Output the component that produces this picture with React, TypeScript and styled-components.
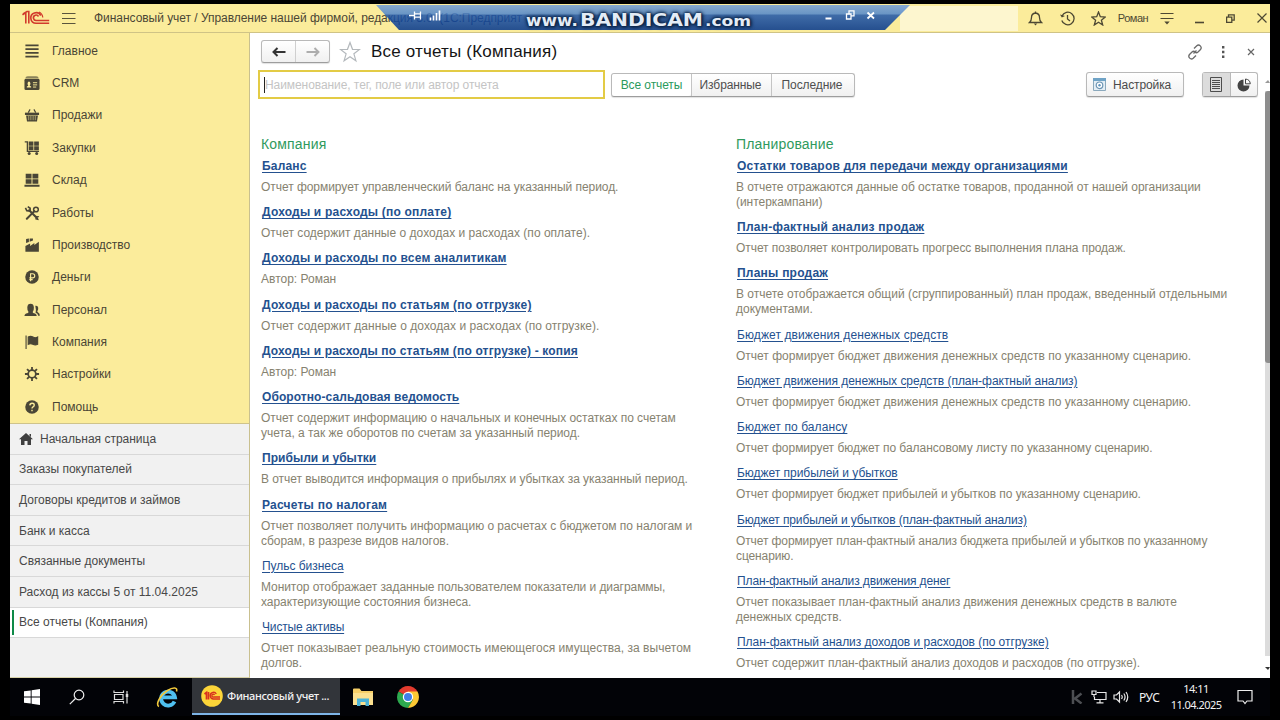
import React from 'react';
import styled, { createGlobalStyle, css } from 'styled-components';

const Global = createGlobalStyle`
  html, body { margin: 0; padding: 0; background: #000; overflow: hidden; }
  * { box-sizing: border-box; }
  svg { display: block; flex: none; }
`;

const Screen = styled.div`
  width: 1280px;
  height: 720px;
  padding: 4px 10px 0;
  background: #000;
  font-family: "Liberation Sans", Arial, sans-serif;
  font-size: 12px;
  color: #4a4536;
  display: flex;
  flex-direction: column;
  overflow: hidden;
`;

const TitleBar = styled.header`
  position: relative;
  height: 29px;
  flex: none;
  display: flex;
  align-items: center;
  background: #fbec9b;
  border-bottom: 1px solid #cfc386;
  padding-left: 12px;
`;

const AppTitle = styled.div`
  margin-left: 18px;
  width: 806px;
  white-space: pre;
  font-size: 12px;
  letter-spacing: -0.04px;
  color: #4b4635;
`;

const GlobalSearch = styled.div`
  width: 118px;
  height: 25px;
  flex: none;
  background: #fdf6cf;
`;

const TitleTools = styled.div`
  display: grid;
  grid-template-columns: 31px 32px 31px 38px 30px 34px 29px 25px;
  align-items: center;
  justify-items: center;
  padding-left: 2px;
  color: #4d4833;
`;

const CloseIcon = styled.svg`
  justify-self: end;
  margin-right: 3px;
`;

const UserName = styled.span`
  font-size: 11px;
  letter-spacing: -0.45px;
`;

const Banner = styled.div`
  position: absolute;
  left: 366px;
  top: 1px;
  width: 534px;
  height: 25px;
  clip-path: polygon(0 0, 100% 0, 509px 100%, 23px 100%);
`;

const BannerFill = styled.div`
  height: 25px;
  opacity: 0.85;
  background: linear-gradient(#719dd8 0, #5086cc 9px, #1e55aa 10px, #00348d 100%);
`;

const BannerIcons = styled.svg`
  position: absolute;
  left: 0;
  top: 0;
`;

const Watermark = styled.div`
  position: absolute;
  left: 516px;
  top: 5px;
  height: 23px;
  display: flex;
  align-items: baseline;
  font-family: "DejaVu Sans", sans-serif;
  font-weight: bold;
  color: #e3ecf6;
  text-shadow: 0 0 2px #0b2344, 0 0 3px #0b2344, 1px 1px 3px #0b2344, 0 0 5px #0b2344;
`;

const WatermarkPart = styled.span<{ $size: number; $width: number; $stretch: number }>`
  font-size: ${p => p.$size}px;
  width: ${p => p.$width}px;
  line-height: 22px;
  white-space: nowrap;
  transform: scaleX(${p => p.$stretch});
  transform-origin: left;
`;

const Body = styled.div`
  display: flex;
  height: 645px;
  flex: none;
`;

const Sidebar = styled.nav`
  width: 240px;
  flex: none;
  display: flex;
  flex-direction: column;
  background: #f1f1f1;
  border-right: 1px solid #c9c08f;
  border-bottom: 1px solid #d8d2a8;
`;

const Sections = styled.div`
  background: #fbec9b;
  height: 391px;
  flex: none;
  padding-top: 1.4px;
  border-bottom: 1px solid #cfc38a;
`;

const Section = styled.div`
  height: 32.4px;
  display: flex;
  align-items: center;
  gap: 12px;
  padding-left: 14px;
  font-size: 12px;
  color: #4a4535;
`;

const OpenTab = styled.div<{ $active?: boolean }>`
  height: 30.6px;
  display: flex;
  align-items: center;
  gap: 7px;
  padding-left: 9px;
  border-bottom: 1px solid #d8d8d8;
  font-size: 12px;
  color: #484848;
  position: relative;
  ${p => p.$active && css`
    background: #fff;
    &::before {
      content: '';
      position: absolute;
      left: 2px;
      top: 2px;
      bottom: 2px;
      width: 2px;
      background: #0e8a48;
    }
  `}
`;

const Main = styled.main`
  position: relative;
  flex: 1;
  background: #fff;
  display: flex;
  flex-direction: column;
  overflow: hidden;
`;

const PageHead = styled.div`
  height: 37px;
  flex: none;
  display: flex;
  align-items: center;
  padding: 0 11px;
`;

const raised = css`
  border: 1px solid #b9b9b9;
  border-bottom-color: #9d9d9d;
  border-radius: 3px;
  background: linear-gradient(#fff, #f0f0f0);
  box-shadow: 0 1px 1px rgba(0, 0, 0, 0.12);
`;

const NavButtons = styled.div`
  ${raised}
  width: 69px;
  height: 23px;
  display: flex;
`;

const NavButton = styled.div`
  flex: 1;
  display: flex;
  align-items: center;
  justify-content: center;
  & + & { border-left: 1px solid #cfcfcf; }
`;

const PageTitle = styled.h1`
  margin: 0 0 0 10px;
  font-size: 17px;
  letter-spacing: 0.18px;
  font-weight: normal;
  color: #151515;
  flex: 1;
  white-space: nowrap;
`;

const HeadTools = styled.div`
  display: flex;
  align-items: center;
  gap: 14px;
`;

const FilterBar = styled.div`
  height: 29px;
  flex: none;
  display: flex;
  align-items: center;
  padding: 0 12px 0 8px;
`;

const SearchField = styled.div`
  width: 347px;
  height: 29px;
  border: 2px solid #e3cb45;
  display: flex;
  align-items: center;
  padding-left: 4px;
  font-size: 12px;
  letter-spacing: -0.07px;
  color: #c4c4c4;
`;

const Caret = styled.span`
  width: 1px;
  height: 16px;
  background: #222;
`;

const Switcher = styled.div`
  ${raised}
  display: flex;
  width: 244px;
  height: 24px;
  margin-left: 6px;
`;

const SwitchItem = styled.div<{ $active?: boolean }>`
  flex: 0 0 80px;
  display: flex;
  align-items: center;
  justify-content: center;
  letter-spacing: -0.1px;
  white-space: nowrap;
  color: ${p => (p.$active ? '#2a9a5c' : '#4f4f4f')};
  background: ${p => (p.$active ? '#fff' : 'transparent')};
  border-radius: 3px;
  & + & { border-left: 1px solid #c4c4c4; border-radius: 0; padding-right: 2px; }
  &:first-child { flex-basis: 79px; }
  &:last-child { flex-basis: 83px; }
`;

const SetupButton = styled.div`
  ${raised}
  width: 98px;
  height: 25px;
  margin-left: auto;
  display: flex;
  align-items: center;
  gap: 7px;
  padding-left: 6px;
  letter-spacing: -0.1px;
  color: #4a4a4a;
`;

const ViewToggle = styled.div`
  ${raised}
  width: 56px;
  height: 25px;
  margin-left: 18px;
  display: flex;
`;

const ViewOption = styled.div<{ $on?: boolean }>`
  flex: 1;
  display: flex;
  align-items: center;
  justify-content: center;
  background: ${p => (p.$on ? '#dcdcdc' : 'transparent')};
  & + & { border-left: 1px solid #b9b9b9; }
`;

const Reports = styled.div`
  display: flex;
  padding: 37px 0 0 11px;
`;

const Group = styled.section`
  width: 475px;
  flex: none;
`;

const GroupName = styled.h2`
  margin: 0 0 5px;
  font-size: 14px;
  letter-spacing: 0.18px;
  line-height: 17px;
  height: 17px;
  font-weight: normal;
  color: #2f9a5d;
`;

const Report = styled.article`
  padding-bottom: 9.22px;
`;

const ReportLink = styled.a<{ $bold?: boolean; $track?: number }>`
  display: block;
  width: max-content;
  margin: 0 0 6px 1px;
  height: 16px;
  line-height: 16px;
  font-size: 12px;
  font-weight: ${p => (p.$bold ? 'bold' : 'normal')};
  letter-spacing: ${p => (p.$bold ? 0.18 : -0.03) + (p.$track ?? 0)}px;
  text-decoration: underline;
  text-underline-offset: 2px;
  color: #24518f;
`;

const ReportNote = styled.p<{ $track?: number }>`
  margin: 0;
  font-size: 12px;
  line-height: 15px;
  letter-spacing: ${p => -0.045 + (p.$track ?? 0)}px;
  white-space: pre;
  color: #86826f;
`;

const Scrollbar = styled.div`
  position: absolute;
  right: 0;
  top: 47px;
  width: 5px;
  height: 590px;
  display: flex;
  flex-direction: column;
  justify-content: space-between;
  align-items: flex-end;
`;

const Track = styled.div`
  flex: 1;
  width: 5px;
  margin: 8px 0 11px;
  background: #dcdcdc;
`;

const Thumb = styled.div`
  height: 272px;
  border-radius: 3px 0 0 3px;
  background: #8d8d8d;
`;

const Taskbar = styled.footer`
  height: 38px;
  flex: none;
  display: flex;
  align-items: center;
  background: #020307;
  color: #f2f2f2;
  font-family: "Noto Sans", "Open Sans", sans-serif;
`;

const TaskIcon = styled.div<{ $w: number }>`
  width: ${p => p.$w}px;
  height: 38px;
  display: flex;
  align-items: center;
  justify-content: center;
`;

const TaskWindow = styled.div`
  width: 148px;
  height: 37px;
  align-self: flex-start;
  display: flex;
  align-items: center;
  gap: 4px;
  padding-left: 9px;
  background: #32353a;
  border-bottom: 2px solid #7db4e6;
  font-size: 11px;
  font-weight: 500;
  letter-spacing: -0.35px;
  white-space: nowrap;
`;

const Tray = styled.div`
  margin-left: auto;
  display: flex;
  align-items: center;
  padding-right: 17px;
`;

const Lang = styled.span`
  font-size: 12px;
  letter-spacing: -0.4px;
  margin: 0 12px 0 10px;
  width: 20px;
`;

const Clock = styled.div`
  width: 50px;
  margin-right: 16px;
  display: flex;
  flex-direction: column;
  align-items: center;
  font-size: 11px;
  line-height: 16.5px;
  letter-spacing: -0.55px;
  white-space: nowrap;
`;

const ink = '#4a4636';

const sectionIcons: Record<string, React.ReactNode> = {
  main: <path d="M1.500 2.500h14M1.500 6.500h14M1.500 10.500h14M1.500 14.500h14" stroke={ink} strokeWidth="1.900" />,
  crm: (
    <>
      <path d="M1.500 3.500Q1.500 1.200 4 1.200h9q2.500 0 2.500 2.300z" fill="#8b8359" />
      <rect x=".5" y="4" width="16" height="12" rx="1.500" fill={ink} />
      <path d="M3 13.200v-1l1.600-.8q-1-1-.8-2.600q.2-1.800 1.500-1.800t1.500 1.800q.2 1.600-.8 2.600l1.600.8v1z" fill="#fbec9b" />
      <path d="M9.500 8.200h4.500M9.500 10.500h4.500M9.500 12.800h3.500" stroke="#fbec9b" strokeWidth="1" />
    </>
  ),
  sales: (
    <>
      <path d="M1 6h15v2.500H1z" fill={ink} />
      <path d="M4.500 6L6.500 2.500M12.500 6L10.500 2.500" stroke={ink} strokeWidth="1.200" />
      <path d="M2.200 9h12.600l-1 6.500H3.200z" fill={ink} />
      <path d="M5 9.500v4.500M7.300 9.500v4.500M9.700 9.500v4.500M12 9.500v4.500" stroke="#d9cc86" strokeWidth=".7" />
    </>
  ),
  purchase: (
    <>
      <path d="M.8 2h2.800v10H16" stroke={ink} strokeWidth="1.400" fill="none" />
      <path d="M5 1.500h5V6H5zM10.800 1.500h5V6h-5zM5 6.700h5v4.300H5zM10.800 6.700h5v4.300h-5z" fill={ink} />
      <circle cx="5.500" cy="14.300" r="1.600" fill={ink} />
      <circle cx="13.500" cy="14.300" r="1.600" fill={ink} />
    </>
  ),
  stock: <path d="M1.800 1.800h6.200v5H1.800zM9 1.800h6.200v5H9zM1.800 7.700h6.200v4.900H1.800zM9 7.700h6.200v4.900H9zM.5 13.500h16v2.300H.5z" fill={ink} />,
  works: (
    <>
      <path d="M3 14.500L11 6.500M5.500 5.500l8.500 8.500" stroke={ink} strokeWidth="2.200" strokeLinecap="round" />
      <path d="M1.500 3l1.500 3 3.500.5L6.500 3.500 4 1.800" stroke={ink} strokeWidth="1.700" fill="none" />
      <circle cx="12.700" cy="4.800" r="2.500" stroke={ink} strokeWidth="1.600" fill="none" />
      <path d="M11.500 12l4.500.5M12 14.500l3.500 1" stroke={ink} strokeWidth="1.300" />
    </>
  ),
  factory: (
    <path d="M1.500 15.700V9.500l5-2.500v2.500l4.500-3v2L15.800 5v10.700zM2.200 2.200l3-.7v3.800l-3 1.200zM6 1.500h3.500v2.300L6 5z" fill={ink} />
  ),
  money: (
    <>
      <circle cx="8.500" cy="8.500" r="7.200" fill={ink} />
      <path d="M7 13V5h2.200q2.200 0 2.200 2.200t-2.200 2.200H5.700M5.700 11.300h3.500" stroke="#fbec9b" strokeWidth="1.200" fill="none" />
    </>
  ),
  staff: (
    <>
      <path d="M.5 15q0-2.500 3-3 1.500-.3 1.200-1.700Q3.300 8.500 3.500 5.500 3.800 1.800 7 1.800t3.500 3.700q.2 3-1.200 4.800-.3 1.400 1.200 1.700 3 .5 3 3z" fill={ink} />
      <path d="M12 4q2.800-.5 3.100 2 .2 2.200-1 3.800 0 1 1.200 1.700 1.500.6 1.500 3h-1.700q-.3-2.500-2.800-3.200.8-2.500-.3-7.300z" fill={ink} />
    </>
  ),
  company: <path d="M2.200 1.500v14.500M4.500 3.200q2.500-1.500 5 0t5 0v7.800q-2.500 1.300-5 0t-5 0z" fill={ink} stroke={ink} strokeWidth="1.200" />,
  settings: (
    <>
      <circle cx="8.500" cy="8.500" r="4.100" stroke={ink} strokeWidth="1.900" fill="none" />
      <path d="M8.500 1v3.200M8.500 12.800V16M1 8.500h3.200M12.800 8.500H16M3.200 3.200l2.300 2.300M11.500 11.500l2.300 2.300M3.200 13.800l2.300-2.300M11.500 5.500l2.300-2.300" stroke={ink} strokeWidth="1.900" />
    </>
  ),
  help: (
    <>
      <circle cx="8.500" cy="8.500" r="7.200" fill={ink} />
      <path d="M6.200 6.800q.2-2.300 2.400-2.300t2.300 1.900q0 1.200-1.300 1.900-1.100.6-1.100 1.700M8.500 11.300v1.700" stroke="#fbec9b" strokeWidth="1.500" fill="none" />
    </>
  ),
};

const sections: [string, string][] = [
  ['main', 'Главное'], ['crm', 'CRM'], ['sales', 'Продажи'], ['purchase', 'Закупки'],
  ['stock', 'Склад'], ['works', 'Работы'], ['factory', 'Производство'], ['money', 'Деньги'],
  ['staff', 'Персонал'], ['company', 'Компания'], ['settings', 'Настройки'], ['help', 'Помощь'],
];

const openTabs = [
  'Заказы покупателей', 'Договоры кредитов и займов', 'Банк и касса',
  'Связанные документы', 'Расход из кассы 5 от 11.04.2025', 'Все отчеты (Компания)',
];

// titleTrack and noteTrack are small letter-spacing corrections, in pixels
type ReportData = { title: string; note: string; bold?: boolean; titleTrack?: number; noteTrack?: number };

const groups: { name: string; reports: ReportData[] }[] = [
  {
    name: 'Компания',
    reports: [
      { bold: true, title: 'Баланс', note: 'Отчет формирует управленческий баланс на указанный период.' },
      { bold: true, title: 'Доходы и расходы (по оплате)', titleTrack: 0.02, note: 'Отчет содержит данные о доходах и расходах (по оплате).', noteTrack: 0.06 },
      { bold: true, title: 'Доходы и расходы по всем аналитикам', titleTrack: 0.03, note: 'Автор: Роман', noteTrack: 0.05 },
      { bold: true, title: 'Доходы и расходы по статьям (по отгрузке)', note: 'Отчет содержит данные о доходах и расходах (по отгрузке).', noteTrack: 0.09 },
      { bold: true, title: 'Доходы и расходы по статьям (по отгрузке) - копия', titleTrack: -0.01, note: 'Автор: Роман', noteTrack: 0.05 },
      { bold: true, title: 'Оборотно-сальдовая ведомость', titleTrack: -0.1, note: 'Отчет содержит информацию о начальных и конечных остатках по счетам\nучета, а так же оборотов по счетам за указанный период.', noteTrack: 0.02 },
      { bold: true, title: 'Прибыли и убытки', titleTrack: -0.14, note: 'В отчет выводится информация о прибылях и убытках за указанный период.' },
      { bold: true, title: 'Расчеты по налогам', titleTrack: 0.05, note: 'Отчет позволяет получить информацию о расчетах с бюджетом по налогам и\nсборам, в разрезе видов налогов.', noteTrack: 0.02 },
      { title: 'Пульс бизнеса', note: 'Монитор отображает заданные пользователем показатели и диаграммы,\nхарактеризующие состояния бизнеса.', noteTrack: -0.02 },
      { title: 'Чистые активы', titleTrack: -0.12, note: 'Отчет показывает реальную стоимость имеющегося имущества, за вычетом\nдолгов.', noteTrack: 0.075 },
    ],
  },
  {
    name: 'Планирование',
    reports: [
      { bold: true, title: 'Остатки товаров для передачи между организациями', titleTrack: 0.01, note: 'В отчете отражаются данные об остатке товаров, проданной от нашей организации\n(интеркампани)' },
      { bold: true, title: 'План-фактный анализ продаж', titleTrack: 0.07, note: 'Отчет позволяет контролировать прогресс выполнения плана продаж.', noteTrack: -0.015 },
      { bold: true, title: 'Планы продаж', titleTrack: 0.05, note: 'В отчете отображается общий (сгруппированный) план продаж, введенный отдельными\nдокументами.', noteTrack: 0.037 },
      { title: 'Бюджет движения денежных средств', titleTrack: 0.13, note: 'Отчет формирует бюджет движения денежных средств по указанному сценарию.', noteTrack: 0.045 },
      { title: 'Бюджет движения денежных средств (план-фактный анализ)', note: 'Отчет формирует бюджет движения денежных средств по указанному сценарию.', noteTrack: 0.045 },
      { title: 'Бюджет по балансу', titleTrack: 0.12, note: 'Отчет формирует бюджет по балансовому листу по указанному сценарию.', noteTrack: 0.015 },
      { title: 'Бюджет прибылей и убытков', note: 'Отчет формирует бюджет прибылей и убытков по указанному сценарию.', noteTrack: -0.01 },
      { title: 'Бюджет прибылей и убытков (план-фактный анализ)', titleTrack: -0.09, note: 'Отчет формирует план-фактный анализ бюджета прибылей и убытков по указанному\nсценарию.', noteTrack: -0.06 },
      { title: 'План-фактный анализ движения денег', titleTrack: -0.09, note: 'Отчет показывает план-фактный анализ движения денежных средств в валюте\nденежных средств.', noteTrack: -0.01 },
      { title: 'План-фактный анализ доходов и расходов (по отгрузке)', note: 'Отчет содержит план-фактный анализ доходов и расходов (по отгрузке).' },
    ],
  },
];

const Logo1C = () => (
  <svg width="28" height="16" viewBox="0 0 28 16" fill="none" stroke="#d23a2c" strokeWidth="1.600">
    <path d="M.5 4.800L3.800 2.500V13.500M6.800 13.500V1.500H5L1 4" />
    <path d="M18.800 5.500A5.300 5.300 0 1 0 14.200 13.300H27.200M16.500 6.500A2.700 2.700 0 1 0 14.500 10.500H27.200" />
    <path d="M20.800 7.500A6.800 6.800 0 0 0 17 2" strokeWidth="1.200" />
  </svg>
);

const Burger = () => (
  <svg width="14" height="14" viewBox="0 0 14 14" stroke="#5a543c" strokeWidth="1.200" style={{ marginLeft: 12 }}>
    <path d="M0 2.500h13.500M0 7.500h13.500M0 12.500h13.500" />
  </svg>
);

const TitleIcons = () => (
  <TitleTools>
    <svg width="15" height="15" viewBox="0 0 15 15" fill="none" stroke="currentColor" strokeWidth="1.300">
      <path d="M1.500 11.500h12q-2-1.800-2-5 0-4-4-4.500-4 .5-4 4.500 0 3.200-2 5zM7.500 2V.5" />
      <path d="M5.800 12.500h3.400L7.500 14.500z" fill="currentColor" stroke="none" />
    </svg>
    <svg width="15" height="15" viewBox="0 0 15 15" fill="none" stroke="currentColor" strokeWidth="1.300">
      <path d="M2 5A6.300 6.300 0 1 1 1.800 9.500M7.500 4v4l2.500 2" />
      <path d="M0 3.500l1.800 3L5 5z" fill="currentColor" stroke="none" />
    </svg>
    <svg width="15" height="15" viewBox="0 0 15 15" fill="none" stroke="currentColor" strokeWidth="1.300">
      <path d="M7.500 1l1.800 4.700 5 .3-3.900 3.200 1.300 4.800-4.200-2.700L3.300 14l1.300-4.800L.7 6l5-.3z" />
    </svg>
    <UserName>Роман</UserName>
    <svg width="14" height="13" viewBox="0 0 14 13" fill="none" stroke="currentColor" strokeWidth="1.200">
      <path d="M.5 1.500h13M.5 6.500h13" />
      <path d="M4.300 9.500h5.400L7 12.500z" fill="currentColor" stroke="none" />
    </svg>
    <svg width="9" height="13" viewBox="0 0 9 13" stroke="currentColor" strokeWidth="1.600"><path d="M0 10.500h9" /></svg>
    <svg width="9" height="9" viewBox="0 0 9 9" fill="none" stroke="currentColor" strokeWidth="1.300">
      <path d="M.6 3.200h5.200v5.200H.6zM2.500 3V.8h5.700v5.400h-2" />
    </svg>
    <CloseIcon width="10" height="10" viewBox="0 0 10 10" stroke="currentColor" strokeWidth="1.200"><path d="M.5.5l9 9M9.500.5l-9 9" /></CloseIcon>
  </TitleTools>
);

const RemoteBanner = () => (
  <Banner>
    <BannerFill />
    <BannerIcons width="534" height="25" viewBox="0 0 534 25" fill="none" stroke="#fff" strokeWidth="1.300">
      <path d="M33 10.500h5M38.500 6.500v8M39 8.800h5.500M39 12.200h5.500M44.500 6.500v8" />
      <path d="M54.500 15.500v-3M57.500 15.500v-5M60.500 15.500V8M63.500 15.500V5.500" strokeWidth="1.700" />
      <path d="M449.500 13.500h6" strokeWidth="2" />
      <path d="M470.500 9h4.500v5h-4.500zM473 8.500V5.800h5v5h-2.500" />
      <path d="M491.500 7.500l6.500 6M498 7.500l-6.500 6" strokeWidth="1.800" />
    </BannerIcons>
  </Banner>
);

const SystemTaskbar = () => (
  <Taskbar>
    <TaskIcon $w={44}>
      <svg width="16" height="16" viewBox="0 0 16 16" fill="#fff"><path d="M0 2.300L6.700 1.400v6.200H0zM7.600 1.300L16 0v7.600H7.600zM0 8.400h6.700v6.200L0 13.700zM7.600 8.400H16V16l-8.400-1.300z" /></svg>
    </TaskIcon>
    <TaskIcon $w={46}>
      <svg width="16" height="16" viewBox="0 0 16 16" fill="none" stroke="#eee" strokeWidth="1.200"><circle cx="10" cy="6" r="4.800" /><path d="M6.500 9.500L.8 15.200" /></svg>
    </TaskIcon>
    <TaskIcon $w={42}>
      <svg width="16" height="14" viewBox="0 0 16 14" fill="none" stroke="#ddd" strokeWidth="1.200"><path d="M1 .5v2h9.500v-2M1.500 4.500h8.500v5H1.500zM1 13.500v-2h9.500v2M14 1v12.500" /><path d="M14 4v3" strokeWidth="2.500" /></svg>
    </TaskIcon>
    <TaskIcon $w={50}>
      <svg width="23" height="23" viewBox="0 0 23 23" fill="none">
        <path d="M18.500 15.500A7 7 0 1 1 19 11.300H7" stroke="#4fc0f0" strokeWidth="3.800" />
        <path d="M3 20.500C-1 19 4 9 11.500 4.500 17 1 22 1 20.500 5.500" stroke="#f2c93c" strokeWidth="1.600" />
      </svg>
    </TaskIcon>
    <TaskWindow>
      <svg width="22" height="22" viewBox="0 0 22 22">
        <circle cx="11" cy="11" r="10.800" fill="#fcd539" />
        <g fill="none" stroke="#d8321f" strokeWidth="1.700">
          <path d="M3.500 9L5.500 7.500v7M7.500 14.500V7" />
          <path d="M15.300 9A3.300 3.300 0 1 0 12.700 14H19M13.500 10A1.400 1.400 0 1 0 12.700 12H19" strokeWidth="1.400" />
        </g>
      </svg>
      Финансовый учет ...
    </TaskWindow>
    <TaskIcon $w={46}>
      <svg width="20" height="18" viewBox="0 0 20 18">
        <path d="M0 1.500Q0 .5 1 .5h5.500L8.500 3H20v14H0z" fill="#f6cf68" />
        <path d="M0 5h20v12H0z" fill="#fbe08f" />
        <path d="M4 10.500h12V18h-3.500v-4h-5v4H4z" fill="#4bb3d8" />
      </svg>
    </TaskIcon>
    <TaskIcon $w={44}>
      <svg width="22" height="22" viewBox="0 0 22 22">
        <path d="M11 11L1.500 5.500A11 11 0 0 1 20.500 5.500z" fill="#e33b2e" />
        <path d="M11 11L1.500 5.500A11 11 0 0 0 11 22L16 14z" fill="#2da94f" />
        <path d="M11 11L16 13.500 11 22A11 11 0 0 0 20.500 5.500H11z" fill="#fcc934" />
        <circle cx="11" cy="11" r="5.200" fill="#fff" />
        <circle cx="11" cy="11" r="4" fill="#3f7fe8" />
      </svg>
    </TaskIcon>
    <Tray>
      <svg width="12" height="14" viewBox="0 0 12 14" stroke="#4c4e52" strokeWidth="2.500"><path d="M2 0v14M10.500 3.500L4 8.500l6.500 5" fill="none" /></svg>
      <svg width="16" height="14" viewBox="0 0 16 14" fill="none" stroke="#e8e8e8" strokeWidth="1.200" style={{ marginLeft: 8 }}>
        <path d="M6 2.500h9v7H3.500V7M9 9.500V13M5.500 12.800h7" /><path d="M1 1h4v3.500H1zM3 4.500V7" />
      </svg>
      <svg width="16" height="14" viewBox="0 0 16 14" fill="none" stroke="#e8e8e8" strokeWidth="1.200" style={{ marginLeft: 6 }}>
        <path d="M1 5h2.500L6.500 2v10L3.500 9H1zM8.500 5q1.500 2 0 4M10.800 3.500q2.500 3.500 0 7M13 2q3.500 5 0 10" />
      </svg>
      <Lang>РУС</Lang>
      <Clock><span>14:11</span><span>11.04.2025</span></Clock>
      <svg width="16" height="16" viewBox="0 0 16 16" fill="none" stroke="#eee" strokeWidth="1.200"><path d="M1 1.500h14v10.500h-5L8 14.500 6 12H1z" /></svg>
    </Tray>
  </Taskbar>
);

export default function App() {
  return (
    <>
      <Global />
      <Screen>
        <TitleBar>
          <Logo1C />
          <Burger />
          <AppTitle>Финансовый учет / Управление нашей фирмой, редакция 3.0  (1С:Предприят</AppTitle>
          <GlobalSearch />
          <TitleIcons />
          <RemoteBanner />
          <Watermark>
            <WatermarkPart $size={15} $width={54} $stretch={1.12}>www.</WatermarkPart>
            <WatermarkPart $size={17} $width={125} $stretch={1.19}>BANDICAM</WatermarkPart>
            <WatermarkPart $size={14} $width={46} $stretch={1.22}>.com</WatermarkPart>
          </Watermark>
        </TitleBar>
        <Body>
          <Sidebar>
            <Sections>
              {sections.map(([icon, label]) => (
                <Section key={icon}>
                  <svg width="16" height="16" viewBox="0 0 17 17">{sectionIcons[icon]}</svg>
                  {label}
                </Section>
              ))}
            </Sections>
            <OpenTab>
              <svg width="14" height="12" viewBox="0 0 14 12" fill="#3f3f3f"><path d="M7 0l7 6.300h-2V12H8.500V8h-3v4H2V6.300H0zM10.500 1h1.500v3l-1.500-1.300z" /></svg>
              Начальная страница
            </OpenTab>
            {openTabs.map((t, i) => <OpenTab key={t} $active={i === 5}>{t}</OpenTab>)}
          </Sidebar>
          <Main>
            <PageHead>
              <NavButtons>
                <NavButton>
                  <svg width="14" height="10" viewBox="0 0 14 10" fill="none" stroke="#333" strokeWidth="2"><path d="M13.500 5H2M5.500 1L1.500 5l4 4" /></svg>
                </NavButton>
                <NavButton>
                  <svg width="14" height="10" viewBox="0 0 14 10" fill="none" stroke="#adadad" strokeWidth="1.900"><path d="M.5 5H12M8.500 1l4 4-4 4" /></svg>
                </NavButton>
              </NavButtons>
              <svg width="22" height="22" viewBox="0 0 22 22" fill="none" stroke="#b3b8bc" strokeWidth="1.200" style={{ marginLeft: 9 }}>
                <path d="M11 1.500l2.500 6.800 7 .2-5.600 4.300 2 6.900L11 15.700l-5.900 4 2-6.900L1.500 8.500l7-.2z" />
              </svg>
              <PageTitle>Все отчеты (Компания)</PageTitle>
              <HeadTools>
                <svg width="16" height="16" viewBox="0 0 16 16" fill="none" stroke="#6a6a6a" strokeWidth="1.300">
                  <path d="M7 4.500l2.800-2.800q1.800-1.500 3.500.2t.2 3.600L11 8q-1.500 1.300-3 .3M9 11.500l-2.800 2.800q-1.800 1.500-3.500-.2t-.2-3.600L5 8q1.500-1.300 3-.3M6.500 9.500l3-3" />
                </svg>
                <svg width="12" height="14" viewBox="0 0 12 14" fill="#555"><path d="M5 1h2.400v2.400H5zM5 5.800h2.400v2.400H5zM5 10.600h2.400V13H5z" /></svg>
                <svg width="16" height="8" viewBox="0 0 16 8" stroke="#666" strokeWidth="1.200"><path d="M5 1l6 6M11 1L5 7" /></svg>
              </HeadTools>
            </PageHead>
            <FilterBar>
              <SearchField><Caret />Наименование, тег, поле или автор отчета</SearchField>
              <Switcher>
                <SwitchItem $active>Все отчеты</SwitchItem>
                <SwitchItem>Избранные</SwitchItem>
                <SwitchItem>Последние</SwitchItem>
              </Switcher>
              <SetupButton>
                <svg width="13" height="13" viewBox="0 0 13 13" fill="none">
                  <path d="M.5.5h12v12H.5z" fill="#e4eef5" stroke="#8ba9bd" />
                  <path d="M0 0h13v3H0z" fill="#6fa3c6" />
                  <circle cx="6.500" cy="7.300" r="3.300" stroke="#6b94b3" strokeWidth="1.200" fill="#fff" />
                  <circle cx="6.500" cy="7.300" r="1.200" fill="#5f94bd" />
                </svg>
                Настройка
              </SetupButton>
              <ViewToggle>
                <ViewOption $on>
                  <svg width="12" height="15" viewBox="0 0 12 15" fill="none" stroke="#4d4d4d"><path d="M.5.5h11v14H.5zM2 3.500h8M2 5.500h8M2 7.500h8M2 9.500h8M2 11.500h8" /></svg>
                </ViewOption>
                <ViewOption>
                  <svg width="14" height="14" viewBox="0 0 14 14"><path d="M6.500 1.500v6h6A6 6 0 1 1 6.500 1.500z" fill="#444" /><path d="M8.500 1v4.800h4.800Q13 1.500 8.500 1z" stroke="#444" fill="none" /></svg>
                </ViewOption>
              </ViewToggle>
            </FilterBar>
            <Reports>
              {groups.map(g => (
                <Group key={g.name}>
                  <GroupName>{g.name}</GroupName>
                  {g.reports.map(r => (
                    <Report key={r.title}>
                      <ReportLink $bold={r.bold} $track={r.titleTrack}>{r.title}</ReportLink>
                      <ReportNote $track={r.noteTrack}>{r.note}</ReportNote>
                    </Report>
                  ))}
                </Group>
              ))}
            </Reports>
            <Scrollbar>
              <svg width="5" height="3" viewBox="0 0 5 3" fill="#999"><path d="M3 0l2 3H0z" /></svg>
              <Track><Thumb /></Track>
              <svg width="5" height="3" viewBox="0 0 5 3" fill="#333"><path d="M0 0h5L3 3z" /></svg>
            </Scrollbar>
          </Main>
        </Body>
        <SystemTaskbar />
      </Screen>
    </>
  );
}
